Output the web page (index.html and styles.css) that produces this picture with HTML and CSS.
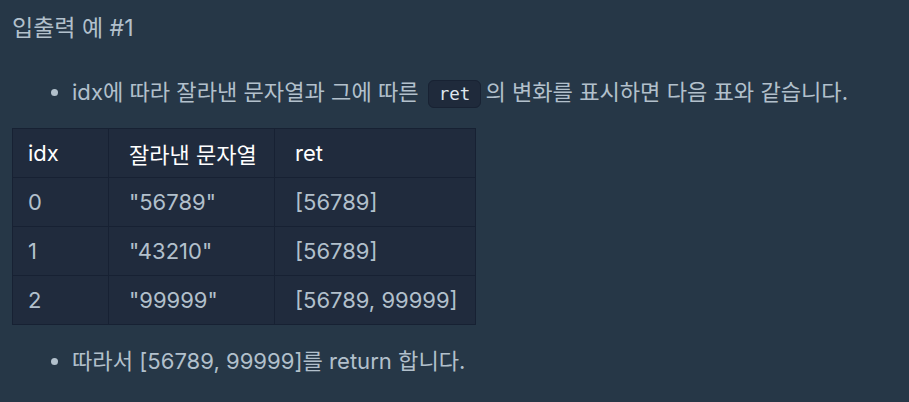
FILE: index.html
```html
<!DOCTYPE html>
<html lang="ko">
<head>
<meta charset="utf-8">
<link rel="stylesheet" href="styles.css">
</head>
<body>
<div class="guide">
  <h5 class="title">입출력 예 #1</h5>
  <ul class="list list-first">
    <li>idx에 따라 잘라낸 문자열과 그에 따른 <code>ret</code>의 변화를 표시하면 다음 표와 같습니다.</li>
  </ul>
  <table class="tbl">
    <thead>
      <tr><th class="c1">idx</th><th class="c2">잘라낸 문자열</th><th class="c3">ret</th></tr>
    </thead>
    <tbody>
      <tr><td>0</td><td>"56789"</td><td>[56789]</td></tr>
      <tr><td>1</td><td>"43210"</td><td>[56789]</td></tr>
      <tr><td>2</td><td>"99999"</td><td>[56789, 99999]</td></tr>
    </tbody>
  </table>
  <ul class="list list-last">
    <li>따라서 [56789, 99999]를 return 합니다.</li>
  </ul>
</div>
</body>
</html>
```
FILE: styles.css
```css
html, body {
  margin: 0;
  padding: 0;
  background: #263747;
}
body {
  font-family: Inter, "Noto Sans CJK KR", sans-serif;
  color: #b2c0cc;
}
.guide {
  padding: 10px 12px 0 12px;
}
.title {
  margin: 0;
  font-size: 23px;
  font-weight: 400;
  line-height: 36px;
  color: #b2c0cc;
}
.list {
  padding-left: 60px;
  font-size: 22.1px;
  line-height: 35px;
}
.list-first {
  margin: 29px 0 16px 0;
}
.list-last {
  margin: 19px 0 0 0;
}
code {
  font-family: "DejaVu Sans Mono", "Liberation Mono", monospace;
  font-size: 17.5px;
  background: #1f2a3b;
  border: 1px solid #182233;
  border-radius: 6px;
  padding: 3px 10px;
  margin: 0 4px 0 3px;
  color: #dfe6ee;
}
.tbl {
  border-collapse: collapse;
  background: #202b3d;
  font-size: 22px;
  margin: 0;
}
.tbl th, .tbl td {
  border: 1px solid #172133;
  height: 48px;
  padding: 0 15px 0 20px;
  text-align: left;
  font-weight: 400;
}
.tbl th:first-child, .tbl td:first-child {
  padding-left: 15px;
}
.tbl th {
  color: #ffffff;
}
.tbl td {
  color: #b2c0cc;
}
.c1 { width: 65px; }
.c2 { width: 130px; }
.c3 { width: 165px; }
```
